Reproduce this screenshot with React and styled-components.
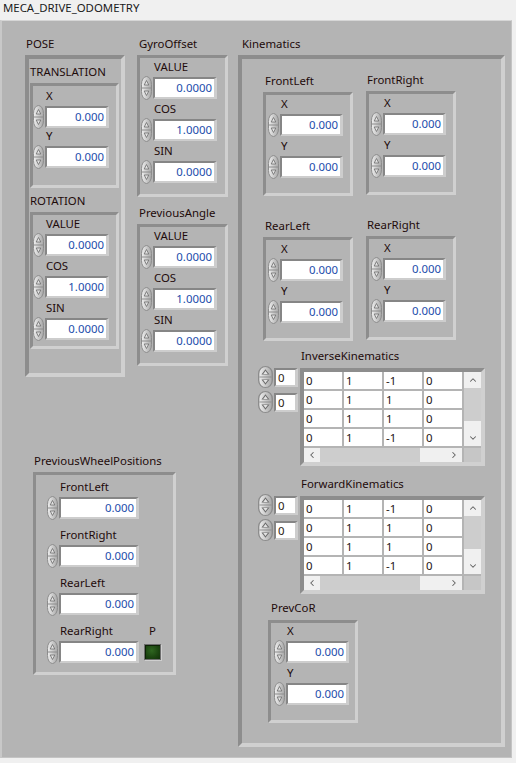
import React from "react";
import styled, { createGlobalStyle } from "styled-components";
import { ChevronUp, ChevronDown, ChevronLeft, ChevronRight } from "lucide-react";

const GlobalStyle = createGlobalStyle`
  html, body { margin: 0; padding: 0; background: #f0f0f0; }
  body { font-family: "Noto Sans", "Open Sans", sans-serif; font-size: 11.4px; }
`;

const Window = styled.div`
  width: 516px;
  height: 763px;
  background: #f0f0f0;
  overflow: hidden;
`;

const TitleBar = styled.div`
  height: 20px;
  line-height: 16px;
  padding-left: 3px;
  font-size: 11.4px;
  color: #1a1a1a;
`;

const Panel = styled.div`
  box-sizing: border-box;
  width: 512px;
  height: 738px;
  background: #b4b4b4;
  border-top: 1px solid #d6d6d6;
  border-left: 2px solid #c8c8c8;
  border-right: 1px solid #c4c4c4;
  border-bottom: 1px solid #c4c4c4;
  padding: 16px 0 0 23px;
  display: flex;
  align-items: flex-start;
`;

const Column = styled.div`
  display: flex;
  flex-direction: column;
  margin: ${(p) => p.$m || 0};
`;

const Row = styled.div`
  display: flex;
  align-items: flex-start;
  margin: ${(p) => p.$m || 0};
`;

const Label = styled.div`
  height: 14px;
  line-height: 14px;
  font-size: 11.4px;
  color: #1e0b0b;
  white-space: nowrap;
  padding-left: ${(p) => p.$indent ?? 1}px;
  margin-top: ${(p) => p.$top ?? 0}px;
  margin-bottom: ${(p) => p.$gap ?? 4}px;
`;

const Frame = styled.div`
  box-sizing: border-box;
  width: ${(p) => p.$w}px;
  height: ${(p) => p.$h}px;
  border: ${(p) => p.$bw ?? 3}px solid;
  border-color: #8d8d8d #d0d0d0 #d0d0d0 #8d8d8d;
  padding: ${(p) => p.$pad || "2px 0 0 2px"};
  display: flex;
  flex-direction: column;
`;

const ControlWrap = styled.div`
  display: flex;
  flex-direction: column;
  margin-bottom: ${(p) => p.$mb ?? 2}px;
`;

const ControlRow = styled.div`
  display: flex;
  align-items: center;
  height: ${(p) => p.$h ?? 24}px;
`;

const Field = styled.div`
  box-sizing: border-box;
  width: ${(p) => p.$w + 5}px;
  height: ${(p) => p.$h ?? 22}px;
  margin-left: 1px;
  border-style: solid;
  border-width: 2px 3px 2px 2px;
  border-color: #868686 #cdcdcd #cdcdcd #868686;
  background: #fff;
  color: ${(p) => (p.$plain ? "#2a1a10" : "#1a4cab")};
  text-align: ${(p) => (p.$plain ? "left" : "right")};
  padding: 0 2px;
  line-height: ${(p) => (p.$h ?? 22) - 4}px;
  font-size: 11.4px;
`;

const SpinSvg = styled.svg`
  display: block;
  flex: none;
`;

const Spinner = ({ w = 11, h = 24 }) => (
  <SpinSvg width={w} height={h} viewBox="0 0 11 24" preserveAspectRatio="none">
    <defs>
      <linearGradient id="spg" x1="0" x2="1" y1="0" y2="0">
        <stop offset="0" stopColor="#f0f0f0" />
        <stop offset="1" stopColor="#a6a6a6" />
      </linearGradient>
    </defs>
    <rect x="0.5" y="0.5" width="10" height="23" rx="5" ry="8" fill="url(#spg)" stroke="#8c8c8c" />
    <line x1="1" y1="12" x2="10" y2="12" stroke="#8c8c8c" />
    <path d="M5.5 4.5 L7.8 9 L3.2 9 Z" fill="#e2e2e2" stroke="#6c6c6c" strokeWidth="0.8" />
    <path d="M5.5 19.5 L7.8 15 L3.2 15 Z" fill="#e2e2e2" stroke="#6c6c6c" strokeWidth="0.8" />
  </SpinSvg>
);

const NumControl = ({ label, value, w = 59, mb, indent = 13 }) => (
  <ControlWrap $mb={mb}>
    <Label $indent={indent} $gap={2}>{label}</Label>
    <ControlRow>
      <Spinner />
      <Field $w={w}>{value}</Field>
    </ControlRow>
  </ControlWrap>
);

const Led = styled.div`
  box-sizing: border-box;
  width: 17px;
  height: 16px;
  border: 1px solid #6e6e6e;
  background: radial-gradient(circle at 45% 40%, #2f6620 0%, #1b4410 60%, #12300a 100%);
  box-shadow: inset 1px 1px 0 #0d2206, 1px 1px 0 #cfcfcf;
`;

const LedBlock = styled.div`
  display: flex;
  flex-direction: column;
  margin-left: 5px;
`;

const TableFrame = styled.div`
  box-sizing: border-box;
  width: 185px;
  height: 98px;
  border: 4px solid;
  border-color: #8d8d8d #d0d0d0 #d0d0d0 #8d8d8d;
  display: grid;
  grid-template-columns: 158px 17px;
  grid-template-rows: 74px 14px;
  gap: 2px;
`;

const Cells = styled.div`
  display: grid;
  grid-template-columns: repeat(4, 38px);
  grid-auto-rows: 17px;
  gap: 2px;
`;

const Cell = styled.div`
  background: #fff;
  color: #241414;
  font-size: 11.4px;
  line-height: 17px;
  padding-left: 2px;
`;

const VScroll = styled.div`
  background: #f0f0f0;
  display: flex;
  flex-direction: column;
`;

const HScroll = styled.div`
  background: #f0f0f0;
  display: flex;
`;

const ArrowBox = styled.div`
  flex: none;
  width: ${(p) => p.$w}px;
  height: ${(p) => p.$h}px;
  display: flex;
  align-items: center;
  justify-content: center;
  color: #606060;
`;

const Track = styled.div`
  flex: 1;
  display: flex;
  flex-direction: ${(p) => (p.$vertical ? "column" : "row")};
`;

const Thumb = styled.div`
  background: #cdcdcd;
  width: ${(p) => p.$w};
  height: ${(p) => p.$h};
`;

const Corner = styled.div`
  background: #c6c6c6;
`;

const IndexCol = styled.div`
  display: flex;
  flex-direction: column;
  gap: 3px;
  margin: 17px 2px 0 0;
`;

const matrix = [
  [0, 1, -1, 0],
  [0, 1, 1, 0],
  [0, 1, 1, 0],
  [0, 1, -1, 0],
];

const MatrixBlock = ({ label, m }) => (
  <Row $m={m}>
    <IndexCol>
      {[0, 1].map((i) => (
        <ControlRow key={i} $h={22}>
          <Spinner w={15} h={22} />
          <Field $w={19} $h={19} $plain>0</Field>
        </ControlRow>
      ))}
    </IndexCol>
    <Column>
      <Label $gap={5}>{label}</Label>
      <TableFrame>
        <Cells>
          {matrix.flat().map((v, i) => (
            <Cell key={i}>{v}</Cell>
          ))}
        </Cells>
        <VScroll>
          <ArrowBox $w={17} $h={16}><ChevronUp size={10} strokeWidth={2.5} /></ArrowBox>
          <Track $vertical>
            <Thumb $w="100%" $h="33px" />
          </Track>
          <ArrowBox $w={17} $h={16}><ChevronDown size={10} strokeWidth={2.5} /></ArrowBox>
        </VScroll>
        <HScroll>
          <ArrowBox $w={16} $h={14}><ChevronLeft size={10} strokeWidth={2.5} /></ArrowBox>
          <Track>
            <Thumb $w="100px" $h="100%" />
          </Track>
          <ArrowBox $w={16} $h={14}><ChevronRight size={10} strokeWidth={2.5} /></ArrowBox>
        </HScroll>
        <Corner />
      </TableFrame>
    </Column>
  </Row>
);

const XYCluster = ({ label, m, indent = 2 }) => (
  <Column $m={m}>
    <Label $indent={indent}>{label}</Label>
    <Frame $w={90} $h={104}>
      <NumControl label="X" value="0.000" w={58} />
      <NumControl label="Y" value="0.000" w={58} />
    </Frame>
  </Column>
);

const AngleCluster = ({ label, m }) => (
  <Column $m={m}>
    <Label $indent={2}>{label}</Label>
    <Frame $w={91} $h={142} $pad="2px 0 0 1px">
      <NumControl label="VALUE" value="0.0000" />
      <NumControl label="COS" value="1.0000" />
      <NumControl label="SIN" value="0.0000" />
    </Frame>
  </Column>
);

export default function App() {
  return (
    <Window>
      <GlobalStyle />
      <TitleBar>MECA_DRIVE_ODOMETRY</TitleBar>
      <Panel>
        <Column>
          <Row>
            <Column>
              <Label>POSE</Label>
              <Frame $w={100} $h={322} $bw={4} $pad="6px 0 0 1px">
                <Label $indent={0}>TRANSLATION</Label>
                <Frame $w={89} $h={105} $pad="3px 0 0 0">
                  <NumControl label="X" value="0.000" mb={0} />
                  <NumControl label="Y" value="0.000" />
                </Frame>
                <Label $indent={0} $top={6}>ROTATION</Label>
                <Frame $w={89} $h={137} $pad="2px 0 0 0">
                  <NumControl label="VALUE" value="0.0000" />
                  <NumControl label="COS" value="1.0000" />
                  <NumControl label="SIN" value="0.0000" />
                </Frame>
              </Frame>
            </Column>
            <Column $m="0 0 0 12px">
              <AngleCluster label="GyroOffset" />
              <AngleCluster label="PreviousAngle" m="9px 0 0 0" />
            </Column>
          </Row>
          <Column $m="77px 0 0 8px">
            <Label>PreviousWheelPositions</Label>
            <Frame $w={143} $h={203} $pad="5px 0 0 11px">
              <NumControl label="FrontLeft" value="0.000" w={75} mb={8} />
              <NumControl label="FrontRight" value="0.000" w={75} mb={8} />
              <NumControl label="RearLeft" value="0.000" w={75} mb={8} />
              <Row>
                <NumControl label="RearRight" value="0.000" w={75} />
                <LedBlock>
                  <Label $indent={5} $gap={2}>P</Label>
                  <ControlRow>
                    <Led />
                  </ControlRow>
                </LedBlock>
              </Row>
            </Frame>
          </Column>
        </Column>
        <Column $m="0 0 0 10px">
          <Label $indent={4}>Kinematics</Label>
          <Frame $w={267} $h={692} $bw={4} $pad="15px 0 0 16px">
            <Row $m="0 0 0 5px">
              <XYCluster label="FrontLeft" />
              <XYCluster label="FrontRight" m="-1px 0 0 13px" indent={1} />
            </Row>
            <Row $m="23px 0 0 5px">
              <XYCluster label="RearLeft" />
              <XYCluster label="RearRight" m="-1px 0 0 13px" indent={1} />
            </Row>
            <MatrixBlock label="InverseKinematics" m="8px 0 0 0" />
            <MatrixBlock label="ForwardKinematics" m="11px 0 0 0" />
            <Column $m="7px 0 0 10px">
              <Label $indent={3} $gap={5}>PrevCoR</Label>
              <Frame $w={90} $h={103} $pad="1px 0 0 3px">
                <NumControl label="X" value="0.000" w={58} />
                <NumControl label="Y" value="0.000" w={58} />
              </Frame>
            </Column>
          </Frame>
        </Column>
      </Panel>
    </Window>
  );
}
